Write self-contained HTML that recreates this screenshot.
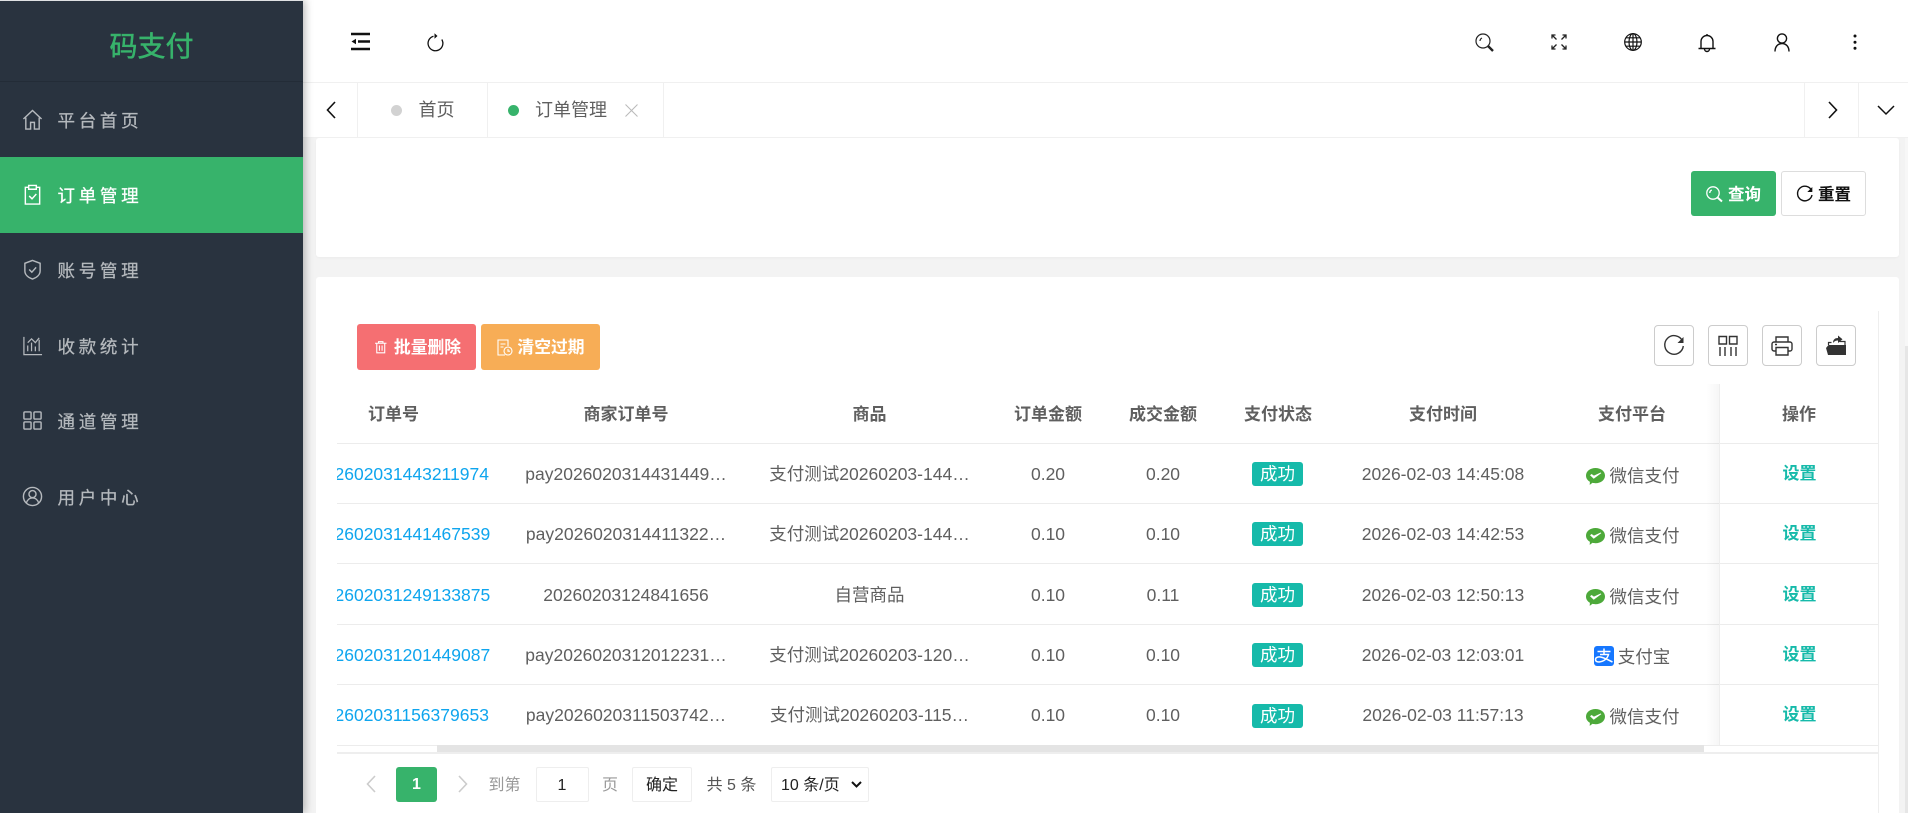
<!DOCTYPE html>
<html lang="zh-CN">
<head>
<meta charset="utf-8">
<title>码支付</title>
<style>
*{box-sizing:border-box}
html,body{margin:0;padding:0;width:1908px;height:813px;overflow:hidden;background:#f3f3f3}
body{position:relative;font-family:"Liberation Sans","Noto Sans CJK SC",sans-serif;font-size:17.5px;color:#5f5f5f}
.a{position:absolute}
.t{position:absolute;white-space:nowrap;line-height:24px;transform:translate(-50%,-50%)}
svg{position:absolute;overflow:visible;fill:none;stroke:currentColor}
#side{left:0;top:0;width:303px;height:813px;background:#29333f;box-shadow:2px 0 8px rgba(0,0,0,.28);z-index:5}
.logo{left:0;top:1px;width:303px;height:81px;border-bottom:1px solid #232c37;color:#37b36b;font-size:28px;text-align:center;line-height:92px;-webkit-text-stroke:.5px #37b36b}
.mi{position:absolute;left:0;width:303px;height:76px;color:#b5b9bd;font-size:17.5px;letter-spacing:3.7px;line-height:78px;padding-left:57.5px;-webkit-text-stroke:.25px currentColor}
.mi.on{background:#37b36b;color:#fff}
.mi svg{left:21.5px;top:26.5px;width:21px;height:21px;stroke-width:1.5}
.card{background:#fff;border-radius:3px}
.line{position:absolute;left:337px;width:1541px;height:1.5px;background:#ececec}
.th{font-weight:bold;color:#5f5f5f;font-size:17px}
.id{position:absolute;left:333.5px;color:#0ea5ee;white-space:nowrap;line-height:24px;transform:translateY(-50%)}
.tag{position:absolute;left:1252px;width:51px;height:24px;background:#16baaa;color:#fff;border-radius:3px;text-align:center;line-height:25px;font-size:17.5px}
.op{color:#16baaa;font-weight:bold;font-size:17px}
.tool{position:absolute;top:325px;width:40px;height:41px;border:1px solid #ccc;border-radius:4px}
.tool svg{left:8px;top:9px;width:22px;height:22px;stroke:#333;stroke-width:1.4}
.pg{position:absolute;top:767px;height:35px;border:1px solid #eee;border-radius:2px;color:#222;text-align:center;line-height:36px;font-size:16px}
.g{color:#999;font-size:16px}
</style>
</head>
<body>
<!-- header -->
<div class="a" style="left:303px;top:0;width:1605px;height:83px;background:#fff;border-bottom:1.5px solid #f0f0f0"></div>
<svg style="left:351px;top:33px;width:19px;height:17px;color:#111" viewBox="0 0 19 17"><path d="M0 1h19M0 16h19M7 8.5h12" stroke-width="2.4"/><path d="M0.5 8.5L5 5.8v5.4z" fill="#111" stroke="none"/></svg>
<svg style="left:426px;top:33px;width:18px;height:18px;color:#111;stroke-width:1.3" viewBox="0 0 18 18"><path d="M7.5 3.200A7.400 7.400 0 1 0 15.800 6.500"/><path d="M8.500 0.300v5.400l3-2.700z" fill="#111" stroke="none"/></svg>
<svg style="left:1475px;top:33px;width:19px;height:19px;color:#222;stroke-width:1.2" viewBox="0 0 19 19"><circle cx="8" cy="8" r="7"/><path d="M5 8a3.500 3.500 0 0 1 2-3"/><path d="M13 13l5 5" stroke-width="2.400"/></svg>
<svg style="left:1551px;top:34px;width:16px;height:16px;color:#222;stroke-width:1.3" viewBox="0 0 16 16"><path d="M1 1l4.500 4.500M15 1l-4.500 4.500M1 15l4.500-4.500M15 15l-4.500-4.500M1 4.500V1h3.500M11.500 1H15v3.500M1 11.500V15h3.500M15 11.500V15h-3.500"/></svg>
<svg style="left:1624px;top:33px;width:18px;height:18px;color:#111;stroke-width:1.2" viewBox="0 0 18 18"><circle cx="9" cy="9" r="8.300"/><ellipse cx="9" cy="9" rx="4" ry="8.300"/><path d="M9 .7v16.600M.7 9h16.600M2 4.800h14M2 13.200h14"/></svg>
<svg style="left:1698px;top:33px;width:18px;height:20px;color:#111;stroke-width:1.4" viewBox="0 0 18 20"><path d="M3 15V8.500a6 6 0 0 1 12 0V15M.5 15.500h17M9 1V2.500M6.500 16a2.500 2.500 0 0 0 5 0"/></svg>
<svg style="left:1774px;top:33px;width:16px;height:19px;color:#111;stroke-width:1.4" viewBox="0 0 16 19"><circle cx="8" cy="5.500" r="4.600"/><path d="M1 18.500c0-5 3-8 7-8s7 3 7 8"/></svg>
<svg style="left:1853px;top:34px;width:4px;height:16px;color:#111" viewBox="0 0 4 16"><circle cx="2" cy="2" r="1.500" fill="#111" stroke="none"/><circle cx="2" cy="8.200" r="1.500" fill="#111" stroke="none"/><circle cx="2" cy="14.300" r="1.500" fill="#111" stroke="none"/></svg>
<!-- tabs -->
<div class="a" style="left:303px;top:83px;width:1605px;height:55px;background:#fff;border-bottom:1.5px solid #f0f0f0"></div>
<div class="a" style="left:357px;top:83px;width:1px;height:54px;background:#f0f0f0"></div>
<div class="a" style="left:487px;top:83px;width:1px;height:54px;background:#f0f0f0"></div>
<div class="a" style="left:663px;top:83px;width:1px;height:54px;background:#f0f0f0"></div>
<div class="a" style="left:1804px;top:83px;width:1px;height:54px;background:#f0f0f0"></div>
<div class="a" style="left:1858px;top:83px;width:1px;height:54px;background:#f0f0f0"></div>
<svg style="left:326px;top:101px;width:10px;height:18px;color:#111;stroke-width:1.6" viewBox="0 0 10 18"><path d="M9 1L1.500 9 9 17"/></svg>
<svg style="left:1828px;top:101px;width:10px;height:18px;color:#111;stroke-width:1.6" viewBox="0 0 10 18"><path d="M1 1l7.500 8L1 17"/></svg>
<svg style="left:1877px;top:105px;width:18px;height:10px;color:#111;stroke-width:1.500" viewBox="0 0 18 10"><path d="M1 1l8 8 8-8"/></svg>
<div class="a" style="left:390.500px;top:104.500px;width:11px;height:11px;border-radius:50%;background:#d2d2d2"></div>
<div class="t" style="left:436.500px;top:109.500px;font-size:18px">首页</div>
<div class="a" style="left:507.500px;top:104.500px;width:11px;height:11px;border-radius:50%;background:#37b36b"></div>
<div class="t" style="left:571px;top:109.500px;font-size:18px">订单管理</div>
<svg style="left:625px;top:104px;width:13px;height:13px;color:#bbb;stroke-width:1.100" viewBox="0 0 13 13"><path d="M.5.500l12 12M12.500.500l-12 12"/></svg>
<!-- content cards -->
<div class="a card" style="left:316px;top:138px;width:1583px;height:119px;box-shadow:0 1px 2px rgba(0,0,0,.03)"></div>
<div class="a card" style="left:316px;top:277px;width:1583px;height:540px"></div>
<div class="a" style="left:1905px;top:138px;width:3px;height:208px;background:#f7f7f7"></div>
<div class="a" style="left:1905px;top:346px;width:3px;height:467px;background:#e6e6e6"></div>
<div class="a" style="left:1878px;top:311px;width:1px;height:502px;background:#eee"></div>
<!-- query buttons -->
<div class="a" style="left:1691px;top:171px;width:85px;height:45px;background:#37b36b;border-radius:3px"></div>
<svg style="left:1706px;top:186px;width:17px;height:16px;color:#fff;stroke-width:1.300" viewBox="0 0 17 16"><circle cx="7" cy="7" r="6.200"/><path d="M3.800 7a3.200 3.200 0 0 1 2-3"/><path d="M11.500 11.500l4.500 4" stroke-width="2"/></svg>
<div class="t" style="left:1744.500px;top:194.500px;color:#fff;font-weight:bold;font-size:16.500px">查询</div>
<div class="a" style="left:1781px;top:171px;width:85px;height:45px;background:#fff;border:1px solid #ddd;border-radius:3px"></div>
<svg style="left:1796px;top:186px;width:17px;height:17px;color:#111;stroke-width:1.400" viewBox="0 0 17 17"><path d="M15.500 4.500A7.300 7.300 0 1 0 16 9"/><path d="M16.300 1v5h-5z" fill="#111" stroke="none"/></svg>
<div class="t" style="left:1834.500px;top:194.500px;color:#111;font-weight:bold;font-size:16.500px">重置</div>
<!-- toolbar -->
<div class="a" style="left:357px;top:324px;width:119px;height:46px;background:#f56f72;border-radius:3px"></div>
<svg style="left:374.500px;top:341px;width:11.500px;height:12.500px;color:#fff;stroke-width:1.200" viewBox="0 0 13 14"><path d="M0 2.500h13M4 2.500V.700h5v1.800M2 2.500v10.800h9V2.500M5 5v6M8 5v6"/></svg>
<div class="t" style="left:427.500px;top:347.500px;color:#fff;font-weight:bold;font-size:16.800px">批量删除</div>
<div class="a" style="left:481px;top:324px;width:119px;height:46px;background:#f7ad56;border-radius:3px"></div>
<svg style="left:497px;top:339px;width:16px;height:17px;color:#fff;stroke-width:1.100" viewBox="0 0 16 17"><path d="M8 16H1V1h10v6M3.500 5h5M3.500 8h3"/><circle cx="11" cy="12" r="4"/><path d="M11 10v2.200h2"/></svg>
<div class="t" style="left:551px;top:347.500px;color:#fff;font-weight:bold;font-size:16.800px">清空过期</div>
<div class="tool" style="left:1654px"><svg viewBox="0 0 22 22"><path d="M19.500 6A9.300 9.300 0 1 0 20.300 11"/><path d="M20.500 2v6h-6z" fill="#333" stroke="none"/></svg></div>
<div class="tool" style="left:1708px"><svg viewBox="0 0 22 22" stroke-width="1.400"><path d="M2 1.500h7.500V9H2zM12.500 1.500H20V9h-7.500zM3 12v9M8 12v9M14 12v9M19 12v9"/></svg></div>
<div class="tool" style="left:1762px"><svg viewBox="0 0 22 22"><path d="M5 7V2h12v5M5 16H3a2 2 0 0 1-2-2V9a2 2 0 0 1 2-2h16a2 2 0 0 1 2 2v5a2 2 0 0 1-2 2h-2M5 12.500h12V20H5zM4 9.500h2" /></svg></div>
<div class="tool" style="left:1816px"><svg viewBox="0 0 22 22" stroke-width="0"><path d="M1 13l2.500-3h17.500V20H3z" fill="#333" stroke="none"/><path d="M8 8c0-3.500 2-5 5-5V0.500l4.500 3.800L13 8V5.500c-2 0-3.500.5-5 2.500z" fill="#333" stroke="none"/><path d="M3.500 10V7.500h3M14.500 6.500H20v3.500" fill="none" stroke="#333" stroke-width="1.200"/></svg></div>
<!-- table lines -->
<div class="line" style="top:442.500px"></div>
<div class="line" style="top:502.500px"></div>
<div class="line" style="top:562.500px"></div>
<div class="line" style="top:623.500px"></div>
<div class="line" style="top:683.500px"></div>
<div class="line" style="top:744.500px"></div>
<!-- fixed column shadow -->
<div class="a" style="left:1706px;top:384px;width:13px;height:361px;background:linear-gradient(to right,rgba(0,0,0,0),rgba(0,0,0,.035))"></div>
<div class="a" style="left:1719px;top:384px;width:1px;height:361px;background:#eee"></div>
<!-- header cells -->
<div class="t th" style="left:393.500px;top:415px">订单号</div>
<div class="t th" style="left:626px;top:415px">商家订单号</div>
<div class="t th" style="left:869.500px;top:415px">商品</div>
<div class="t th" style="left:1048px;top:415px">订单金额</div>
<div class="t th" style="left:1163px;top:415px">成交金额</div>
<div class="t th" style="left:1278px;top:415px">支付状态</div>
<div class="t th" style="left:1443px;top:415px">支付时间</div>
<div class="t th" style="left:1632px;top:415px">支付平台</div>
<div class="t th" style="left:1799px;top:415px">操作</div>
<!-- rows -->
<div class="a" style="left:337px;top:443px;width:400px;height:302px;overflow:hidden">
<div class="id" style="left:-2.500px;top:31px">2602031443211974</div>
<div class="id" style="left:-2.500px;top:91px">2602031441467539</div>
<div class="id" style="left:-2.500px;top:151.500px">2602031249133875</div>
<div class="id" style="left:-2.500px;top:211.500px">2602031201449087</div>
<div class="id" style="left:-2.500px;top:272px">2602031156379653</div>
</div>
<div class="t" style="left:626px;top:474px">pay2026020314431449…</div>
<div class="t" style="left:626px;top:534px">pay2026020314411322…</div>
<div class="t" style="left:626px;top:594.500px">20260203124841656</div>
<div class="t" style="left:626px;top:654.500px">pay2026020312012231…</div>
<div class="t" style="left:626px;top:715px">pay2026020311503742…</div>
<div class="t" style="left:869.500px;top:474px">支付测试20260203-144…</div>
<div class="t" style="left:869.500px;top:534px">支付测试20260203-144…</div>
<div class="t" style="left:869.500px;top:594.500px">自营商品</div>
<div class="t" style="left:869.500px;top:654.500px">支付测试20260203-120…</div>
<div class="t" style="left:869.500px;top:715px">支付测试20260203-115…</div>
<div class="t" style="left:1048px;top:474px">0.20</div>
<div class="t" style="left:1048px;top:534px">0.10</div>
<div class="t" style="left:1048px;top:594.500px">0.10</div>
<div class="t" style="left:1048px;top:654.500px">0.10</div>
<div class="t" style="left:1048px;top:715px">0.10</div>
<div class="t" style="left:1163px;top:474px">0.20</div>
<div class="t" style="left:1163px;top:534px">0.10</div>
<div class="t" style="left:1163px;top:594.500px">0.11</div>
<div class="t" style="left:1163px;top:654.500px">0.10</div>
<div class="t" style="left:1163px;top:715px">0.10</div>
<div class="tag" style="top:462px">成功</div>
<div class="tag" style="top:522px">成功</div>
<div class="tag" style="top:583px">成功</div>
<div class="tag" style="top:643px">成功</div>
<div class="tag" style="top:703.500px">成功</div>
<div class="t" style="left:1443px;top:474px">2026-02-03 14:45:08</div>
<div class="t" style="left:1443px;top:534px">2026-02-03 14:42:53</div>
<div class="t" style="left:1443px;top:594.500px">2026-02-03 12:50:13</div>
<div class="t" style="left:1443px;top:654.500px">2026-02-03 12:03:01</div>
<div class="t" style="left:1443px;top:715px">2026-02-03 11:57:13</div>
<!-- platform -->
<svg style="left:1586px;top:467.500px;width:19px;height:18px;stroke:none" viewBox="0 0 18 17"><path d="M9 0c5 0 9 3 9 7.200s-4 7.200-9 7.200c-1 0-2-.1-2.800-.4L3.500 16l.2-3C1.400 11.700 0 9.600 0 7.200 0 3 4 0 9 0z" fill="#4da93a"/><path d="M3.800 6.800l3.500 3.400 7.200-5.400-.6-.6-6.400 3-2.200-1.500z" fill="#fff"/></svg>
<div class="t" style="left:1644.500px;top:476px">微信支付</div>
<svg style="left:1586px;top:527.500px;width:19px;height:18px;stroke:none" viewBox="0 0 18 17"><path d="M9 0c5 0 9 3 9 7.200s-4 7.200-9 7.200c-1 0-2-.1-2.800-.4L3.500 16l.2-3C1.400 11.700 0 9.600 0 7.200 0 3 4 0 9 0z" fill="#4da93a"/><path d="M3.800 6.800l3.500 3.400 7.200-5.400-.6-.6-6.400 3-2.200-1.500z" fill="#fff"/></svg>
<div class="t" style="left:1644.500px;top:536px">微信支付</div>
<svg style="left:1586px;top:588.500px;width:19px;height:18px;stroke:none" viewBox="0 0 18 17"><path d="M9 0c5 0 9 3 9 7.200s-4 7.200-9 7.200c-1 0-2-.1-2.800-.4L3.500 16l.2-3C1.400 11.700 0 9.600 0 7.200 0 3 4 0 9 0z" fill="#4da93a"/><path d="M3.800 6.800l3.500 3.400 7.200-5.400-.6-.6-6.400 3-2.200-1.500z" fill="#fff"/></svg>
<div class="t" style="left:1644.500px;top:597px">微信支付</div>
<svg style="left:1594px;top:646px;width:20px;height:20px;stroke:none" viewBox="0 0 20 20"><rect width="20" height="20" rx="3" fill="#1677ff"/><path d="M3.500 5.500h13M10 2.500v6M6 8.500h8.500c-1 4-4.500 7-9.500 7.500-2.500 0-3.500-1-3.500-2.500 0-2 2.500-3 5-2.500 4 .7 8 3 12 5" stroke="#fff" stroke-width="1.500" fill="none"/></svg>
<div class="t" style="left:1644px;top:657px">支付宝</div>
<svg style="left:1586px;top:708.500px;width:19px;height:18px;stroke:none" viewBox="0 0 18 17"><path d="M9 0c5 0 9 3 9 7.200s-4 7.200-9 7.200c-1 0-2-.1-2.800-.4L3.500 16l.2-3C1.400 11.700 0 9.600 0 7.200 0 3 4 0 9 0z" fill="#4da93a"/><path d="M3.800 6.800l3.500 3.400 7.200-5.400-.6-.6-6.400 3-2.200-1.500z" fill="#fff"/></svg>
<div class="t" style="left:1644.500px;top:717px">微信支付</div>
<div class="t op" style="left:1799.500px;top:474px">设置</div>
<div class="t op" style="left:1799.500px;top:534px">设置</div>
<div class="t op" style="left:1799.500px;top:594.500px">设置</div>
<div class="t op" style="left:1799.500px;top:654.500px">设置</div>
<div class="t op" style="left:1799.500px;top:715px">设置</div>
<!-- scrollbar -->
<div class="a" style="left:437px;top:745px;width:1267px;height:7px;background:#e4e4e4"></div>
<div class="a" style="left:337px;top:752px;width:1541px;height:1.500px;background:#eee"></div>
<!-- pagination -->
<svg style="left:366px;top:775px;width:10px;height:18px;color:#ccc;stroke-width:1.600" viewBox="0 0 10 18"><path d="M9 1L1.500 9 9 17"/></svg>
<div class="a" style="left:396px;top:767px;width:41px;height:35px;background:#37b36b;border-radius:3px;color:#fff;text-align:center;line-height:36px;font-size:16px;font-weight:bold">1</div>
<svg style="left:458px;top:775px;width:10px;height:18px;color:#ccc;stroke-width:1.600" viewBox="0 0 10 18"><path d="M1 1l7.500 8L1 17"/></svg>
<div class="t g" style="left:504.500px;top:785.500px">到第</div>
<div class="pg" style="left:535.500px;width:53px">1</div>
<div class="t g" style="left:610px;top:785.500px">页</div>
<div class="pg" style="left:632px;width:60px">确定</div>
<div class="t" style="left:731.500px;top:785.500px;font-size:16px;color:#555">共 5 条</div>
<div class="pg" style="left:771px;width:98px;text-align:left;padding-left:9px">10 条/页</div>
<svg style="left:851px;top:781px;width:11px;height:7px;color:#111;stroke-width:2" viewBox="0 0 11 7"><path d="M1 1l4.500 4.500L10 1"/></svg>
<!-- sidebar -->
<div id="side" class="a">
<div class="a" style="left:0;top:0;width:303px;height:1px;background:#dfe1e3"></div>
<div class="a logo">码支付</div>
<div class="mi" style="top:82px"><svg viewBox="0 0 22 22"><path d="M1.500 10.500L11 1.500l9.500 9M4 9v12h5v-7h4v7h5V9"/></svg>平台首页</div>
<div class="mi on" style="top:157px"><svg viewBox="0 0 22 22" stroke-width="1.600"><path d="M7 3.500H3.500v17.500h15V3.500H15M7 1.500h8v4H7zM7.500 12.500l3 3 4.500-5"/></svg>订单管理</div>
<div class="mi" style="top:232px"><svg viewBox="0 0 22 22"><path d="M11 1.500l8 3v8c0 4-3.500 7-8 8.500-4.500-1.500-8-4.500-8-8.500v-8zM7.500 11l2.800 2.800 4.500-5"/></svg>账号管理</div>
<div class="mi" style="top:308px"><svg viewBox="0 0 22 22"><path d="M2 2v18.500h19M6 17v-6M10 17V8M14 17v-5M18 17V5M6 8l4-4 4 4 4-5" stroke-width="1.300"/></svg>收款统计</div>
<div class="mi" style="top:383px"><svg viewBox="0 0 22 22"><rect x="2" y="2" width="7.500" height="7.500" rx="1"/><rect x="12.500" y="2" width="7.500" height="7.500" rx="1"/><rect x="2" y="12.500" width="7.500" height="7.500" rx="1"/><rect x="12.500" y="12.500" width="7.500" height="7.500" rx="1"/></svg>通道管理</div>
<div class="mi" style="top:459px"><svg viewBox="0 0 22 22"><circle cx="11" cy="11" r="9.500"/><circle cx="11" cy="8.500" r="3.700"/><path d="M4.500 18c1-3.500 3.500-5.500 6.500-5.500s5.500 2 6.500 5.500"/></svg>用户中心</div>
</div>
</body>
</html>
